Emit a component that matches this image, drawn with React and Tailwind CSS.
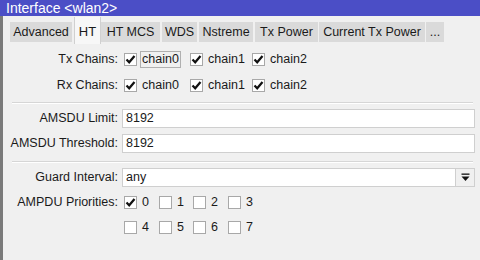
import React from "react";

function Check({ checked }) {
  return (
    <span className="w-[13px] h-[13px] bg-white border border-[#a8a8a8] flex items-center justify-center shrink-0">
      {checked && (
        <svg width="11" height="11" viewBox="0 0 11 11">
          <path d="M1.5 5.5 L4.2 8.3 L9.5 2" fill="none" stroke="#111" strokeWidth="2.2" />
        </svg>
      )}
    </span>
  );
}

function Item({ checked, label, w, focus }) {
  return (
    <div className={`flex items-center ${w}`}>
      <Check checked={checked} />
      <span className={`ml-[3px] px-[1px] leading-[15px] border ${focus ? "border-[#b0b0b0]" : "border-transparent"}`}>{label}</span>
    </div>
  );
}

function Label({ children }) {
  return <div className="w-[119px] pr-[4px] text-right shrink-0 whitespace-nowrap">{children}</div>;
}

function Sep() {
  return <div className="ml-[9px] mr-[7px] h-[2px] border-t border-[#d6d6d6] border-b border-b-white" />;
}

const tabs = [
  { t: "Advanced", w: "w-[62px]", ml: "ml-[7px]" },
  { t: "HT", w: "w-[27px]", ml: "ml-[2px]", sel: true },
  { t: "HT MCS", w: "w-[59px]", ml: "ml-[0px]" },
  { t: "WDS", w: "w-[35px]", ml: "ml-[2px]" },
  { t: "Nstreme", w: "w-[54px]", ml: "ml-[2px]" },
  { t: "Tx Power", w: "w-[63px]", ml: "ml-[2px]" },
  { t: "Current Tx Power", w: "w-[106px]", ml: "ml-[1px]" },
  { t: "...", w: "w-[18px]", ml: "ml-[1px]" },
];

export default function App() {
  return (
    <div className="w-[480px] h-[260px] overflow-hidden bg-[#f0f0f0] text-[12.5px] text-[#1a1a1a] flex flex-col" style={{ fontFamily: '"Liberation Sans", Arial, sans-serif' }}>
      <div className="h-[16px] bg-[#4b4ec6] text-white text-[14px] leading-[16px] pl-[6px] shrink-0">Interface &lt;wlan2&gt;</div>
      <div className="flex flex-1">
        <div className="w-[3px] bg-[#7a7a7a] shrink-0" />
        <div className="flex-1 flex flex-col">
          <div className="h-[28px] flex items-start shrink-0">
            {tabs.map((tb) =>
              tb.sel ? (
                <div key={tb.t} className={`${tb.ml} ${tb.w} mt-[1px] h-[27px] bg-[#f7f7f7] border-x border-[#d0d0d0] flex items-start justify-center pt-[5px] text-[13px]`}>
                  {tb.t}
                </div>
              ) : (
                <div key={tb.t} className={`${tb.ml} ${tb.w} mt-[6px] h-[20px] bg-[#dadada] flex items-center justify-center whitespace-nowrap text-[12.5px]`}>
                  {tb.t}
                </div>
              )
            )}
          </div>
          <div className="h-[6px]" />
          <div className="flex items-center h-[18px]">
            <Label>Tx Chains:</Label>
            <div className="flex items-center ml-[2px]">
              <Item checked label="chain0" w="w-[66px]" focus />
              <Item checked label="chain1" w="w-[62px]" />
              <Item checked label="chain2" w="w-[60px]" />
            </div>
          </div>
          <div className="h-[8px]" />
          <div className="flex items-center h-[18px]">
            <Label>Rx Chains:</Label>
            <div className="flex items-center ml-[2px]">
              <Item checked label="chain0" w="w-[66px]" />
              <Item checked label="chain1" w="w-[62px]" />
              <Item checked label="chain2" w="w-[60px]" />
            </div>
          </div>
          <div className="h-[8px]" />
          <Sep />
          <div className="h-[5px]" />
          <div className="flex items-center h-[19px]">
            <Label>AMSDU Limit:</Label>
            <div className="flex-1 mr-[5px] h-[19px] bg-white border border-[#cfcfcf] pl-[3px] leading-[17px]">8192</div>
          </div>
          <div className="h-[6px]" />
          <div className="flex items-center h-[19px]">
            <Label>AMSDU Threshold:</Label>
            <div className="flex-1 mr-[5px] h-[19px] bg-white border border-[#cfcfcf] pl-[3px] leading-[17px]">8192</div>
          </div>
          <div className="h-[8px]" />
          <Sep />
          <div className="h-[5px]" />
          <div className="flex items-center h-[19px]">
            <Label>Guard Interval:</Label>
            <div className="flex-1 mr-[5px] h-[19px] flex">
              <div className="flex-1 bg-white border border-[#cfcfcf] pl-[3px] leading-[17px]">any</div>
              <div className="w-[19px] h-[19px] border border-[#cfcfcf] border-l-0 bg-[#f0f0f0] flex items-center justify-center">
                <svg width="9" height="9" viewBox="0 0 9 9">
                  <rect x="0.5" y="0.5" width="8" height="1.3" fill="#111" />
                  <path d="M0.5 3.5 H8.5 L4.5 8 Z" fill="#111" />
                </svg>
              </div>
            </div>
          </div>
          <div className="h-[7px]" />
          <div className="flex items-center h-[17px]">
            <Label>AMPDU Priorities:</Label>
            <div className="flex items-center ml-[2px]">
              <Item checked label="0" w="w-[35px]" />
              <Item label="1" w="w-[34px]" />
              <Item label="2" w="w-[35px]" />
              <Item label="3" w="w-[35px]" />
            </div>
          </div>
          <div className="h-[8px]" />
          <div className="flex items-center h-[17px]">
            <Label></Label>
            <div className="flex items-center ml-[2px]">
              <Item label="4" w="w-[35px]" />
              <Item label="5" w="w-[34px]" />
              <Item label="6" w="w-[35px]" />
              <Item label="7" w="w-[35px]" />
            </div>
          </div>
        </div>
      </div>
    </div>
  );
}
